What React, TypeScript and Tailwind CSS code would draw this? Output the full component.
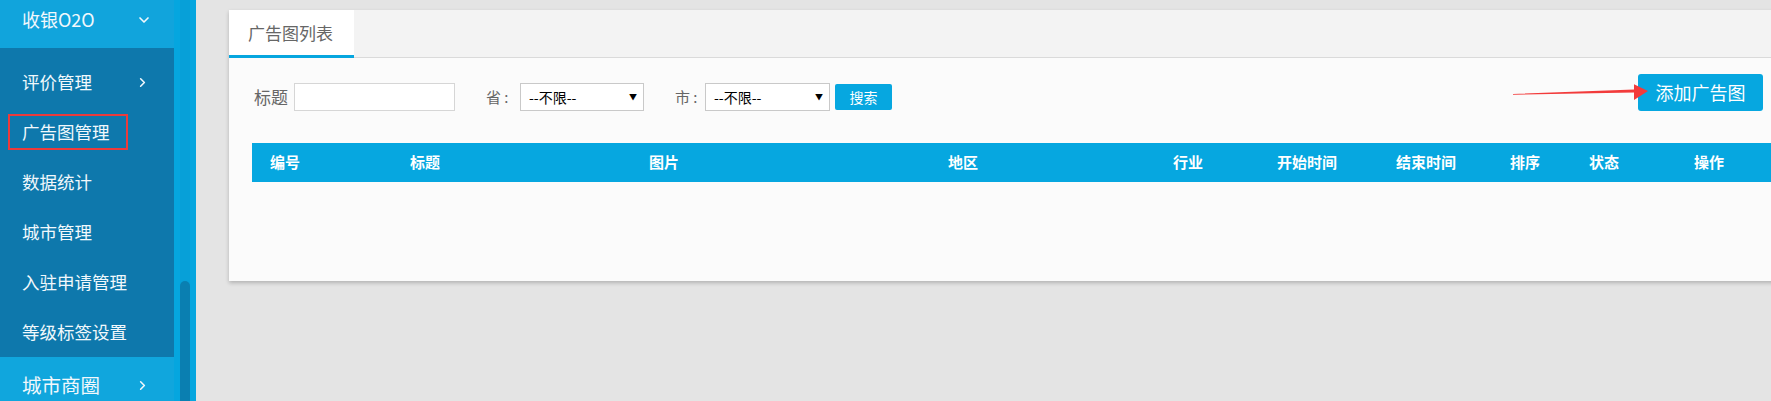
import { ChevronDown, ChevronRight } from "lucide-react";

const subMenu = ["评价管理", "广告图管理", "数据统计", "城市管理", "入驻申请管理", "等级标签设置"];

const columns = ["编号", "标题", "图片", "地区", "行业", "开始时间", "结束时间", "排序", "状态", "操作"];

const Sidebar = () => {
  return (
    <div className="flex h-full w-[196px] shrink-0">
      <div className="flex w-[174px] flex-col text-[#f1f8fc]">
        {/* top group */}
        <div className="flex h-[48px] shrink-0 items-center justify-between bg-[#11a4dc] pb-[9px] pl-[22px] pr-[22px]">
          <span className="text-[18px]">收银O2O</span>
          <ChevronDown className="h-[16px] w-[16px]" strokeWidth={2.5} />
        </div>

        {/* sub menu */}
        <div className="flex shrink-0 flex-col bg-[#0e78ac] pt-[9px]">
          {subMenu.map((item, i) =>
            item === "广告图管理" ? (
              <div key={item} className="flex h-[50px] items-center">
                <span className="ml-[8px] flex h-[36px] items-center border-2 border-[#ec3b3b] pl-[12px] pr-[16px] text-[17.5px]">
                  {item}
                </span>
              </div>
            ) : (
              <div key={item} className="flex h-[50px] items-center justify-between pl-[22px] pr-[24px] text-[17.5px]">
                <span>{item}</span>
                {i === 0 && <ChevronRight className="h-[15px] w-[15px]" strokeWidth={2.5} />}
              </div>
            )
          )}
        </div>

        <div className="flex flex-1 items-center justify-between bg-[#10a6dd] pl-[22px] pr-[24px] pt-[12px]">
          <span className="text-[19.5px]">城市商圈</span>
          <ChevronRight className="h-[15px] w-[15px]" strokeWidth={2.5} />
        </div>
      </div>

      {/* scroll strip */}
      <div className="flex h-full w-[22px] bg-[#05a6df] pl-[6px]">
        <div className="flex h-full w-[10px] flex-col bg-[#07a0d8]">
          <div className="h-[281px] shrink-0" />
          <div className="flex-1 rounded-t-[5px] bg-[#0a7fb1]" />
        </div>
      </div>
    </div>
  );
};

const SelectBox = ({ width }: { width: string }) => (
  <div className={`flex h-[28px] ${width} items-center justify-between border border-[#c9c9c9] bg-white pl-[8px] pr-[6px]`}>
    <span className="text-[14px] text-black">--不限--</span>
    <span className="text-[8px] text-black">▼</span>
  </div>
);

const App = () => {
  return (
    <div className="flex h-[401px] w-[1771px] overflow-hidden bg-[#e4e4e4] font-['Noto_Sans_CJK_SC','Noto_Sans',sans-serif]">
      <Sidebar />

      <div className="min-w-0 flex-1 pl-[33px] pt-[10px]">
        <div className="flex h-[271px] w-[1600px] flex-col bg-[#fbfbfb] shadow-[0_2px_4px_rgba(0,0,0,0.22)]">
          {/* tabs */}
          <div className="flex h-[48px] shrink-0 border-b border-[#dadada] bg-[#f3f3f3]">
            <div className="flex h-[48px] w-[125px] items-center border-b-[3px] border-[#06a6df] bg-white pl-[19px] text-[17px] text-[#666]">
              广告图列表
            </div>
          </div>

          <div className="flex flex-1 flex-col px-[23px] pt-[16px]">
            {/* filters */}
            <div className="mr-[43px] flex items-start justify-between">
              <div className="mt-[9px] flex items-center">
                <span className="ml-[2px] mr-[5px] w-[35px] text-[17px] text-[#666]">标题</span>
                <div className="h-[28px] w-[161px] border border-[#d6d6d6] bg-white" />
                <span className="ml-[31px] w-[34px] text-[15px] text-[#666]">省 :</span>
                <SelectBox width="w-[124px]" />
                <span className="ml-[31px] w-[30px] text-[15px] text-[#666]">市 :</span>
                <SelectBox width="w-[125px]" />
                <button className="ml-[5px] flex h-[26px] w-[57px] items-center justify-center rounded-[2px] bg-[#06a7e0] text-[14px] text-white">
                  搜索
                </button>
              </div>

              <div className="relative">
                <svg className="absolute left-[-125px] top-[7px]" width="140" height="22" viewBox="0 0 140 22">
                  <polygon points="0,13 121,8.5 121,3.3 135,10 121,19 121,11.5 0,13.8" fill="#f23b3b" />
                </svg>
                <button className="flex h-[37px] w-[125px] items-center justify-center rounded-[3px] bg-[#06a7e0] text-[18px] text-white">
                  添加广告图
                </button>
              </div>
            </div>

            {/* table header */}
            <div className="mt-[32px] grid h-[39px] grid-cols-[140px_239px_299px_225px_104px_119px_114px_79px_105px_1fr] items-center bg-[#06a7e0] text-[15px] font-bold text-white">
              {columns.map((c) => (
                <div key={c} className="pl-[18px]">
                  {c}
                </div>
              ))}
            </div>
          </div>
        </div>
      </div>
    </div>
  );
};

export default App;
